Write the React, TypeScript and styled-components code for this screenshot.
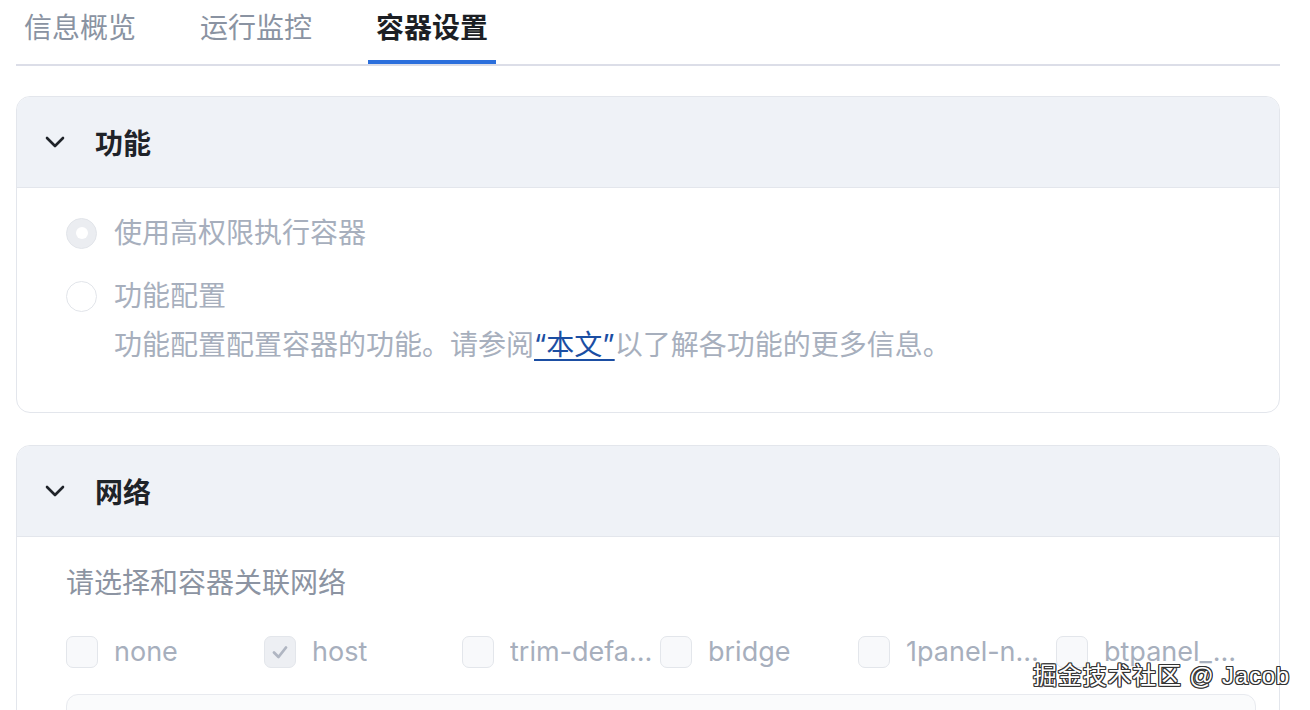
import React from "react";
import styled, { createGlobalStyle } from "styled-components";

const Global = createGlobalStyle`
  html, body { margin: 0; padding: 0; background: #ffffff; }
  body {
    height: 710px;
    overflow: hidden;
    font-family: Inter, "Noto Sans CJK SC", "Noto Sans", sans-serif;
    -webkit-font-smoothing: antialiased;
  }
`;

const Page = styled.div`
  position: relative;
  height: 710px;
  padding: 0 30px 0 16px;
  box-sizing: border-box;
  overflow: hidden;
`;

const Tabs = styled.div`
  display: flex;
  gap: 48px;
  border-bottom: 2px solid #dcdee8;
`;

const Tab = styled.div<{ $active?: boolean }>`
  height: 56px;
  line-height: 56px;
  padding: 0 8px 4px;
  font-size: 28px;
  font-weight: ${(p) => (p.$active ? 600 : 400)};
  color: ${(p) => (p.$active ? "#1c1f24" : "#8a93a2")};
  border-bottom: 4px solid ${(p) => (p.$active ? "#2b6fdc" : "transparent")};
`;

const Cards = styled.div`
  display: flex;
  flex-direction: column;
  gap: 32px;
  margin-top: 30px;
`;

const Card = styled.section`
  border: 1.5px solid #e3e6ec;
  border-radius: 14px;
  overflow: hidden;
  background: #fff;
`;

const CardHeader = styled.div`
  height: 90px;
  display: flex;
  align-items: center;
  gap: 30px;
  padding-left: 28px;
  background: #eff2f7;
  border-bottom: 1.5px solid #e3e6ec;
`;

const Title = styled.div`
  font-size: 28px;
  font-weight: 600;
  color: #1f2329;
`;

const CardBody = styled.div<{ $pt: number; $pb: number }>`
  padding: ${(p) => p.$pt}px 26px ${(p) => p.$pb}px 49px;
  display: flex;
  flex-direction: column;
`;

const RadioRow = styled.div<{ $mt?: number }>`
  display: flex;
  align-items: center;
  gap: 17px;
  height: 40px;
  margin-top: ${(p) => p.$mt ?? 0}px;
`;

const RadioDot = styled.span<{ $checked?: boolean }>`
  width: 31px;
  height: 31px;
  border-radius: 50%;
  box-sizing: border-box;
  border: 1.5px solid #e2e5ea;
  background: ${(p) => (p.$checked ? "#ebedf1" : "#ffffff")};
  display: flex;
  align-items: center;
  justify-content: center;
  &::after {
    content: "";
    width: 12px;
    height: 12px;
    border-radius: 50%;
    background: ${(p) => (p.$checked ? "#ffffff" : "transparent")};
  }
`;

const MutedText = styled.span`
  font-size: 28px;
  color: #a7afbd;
  line-height: 40px;
  white-space: nowrap;
`;

const Desc = styled.div`
  margin-top: 9px;
  margin-left: 48px;
  font-size: 28px;
  line-height: 40px;
  color: #a7afbd;
  white-space: nowrap;
`;

const Link = styled.a`
  color: #1b4ea3;
  text-decoration: underline;
  text-underline-offset: 4px;
  text-decoration-thickness: 2px;
`;

const Prompt = styled.div`
  font-size: 28px;
  line-height: 40px;
  color: #8c94a2;
`;

const CheckRow = styled.div`
  display: flex;
  margin-top: 29px;
  height: 40px;
`;

const CheckItem = styled.label`
  width: 198px;
  flex: none;
  display: flex;
  align-items: center;
  gap: 16px;
`;

const Box = styled.span<{ $checked?: boolean }>`
  width: 32px;
  height: 32px;
  flex: none;
  box-sizing: border-box;
  border: 1.5px solid #e3e6eb;
  border-radius: 7px;
  background: ${(p) => (p.$checked ? "#edeff3" : "#f8f9fb")};
  display: flex;
  align-items: center;
  justify-content: center;
`;

const CheckLabel = styled.span`
  font-size: 27px;
  color: #a7afbd;
  max-width: 146px;
  overflow: hidden;
  text-overflow: ellipsis;
  white-space: nowrap;
  line-height: 40px;
`;

const InputBox = styled.div`
  margin-top: 22px;
  height: 70px;
  border: 1.5px solid #e8eaef;
  border-radius: 12px;
  background: #fafbfc;
  width: 1188px;
`;

const Watermark = styled.div`
  position: absolute;
  right: 20px;
  bottom: 19px;
  font-size: 24px;
  font-family: "Liberation Sans", "Noto Sans CJK SC", sans-serif;
  color: #ffffff;
  letter-spacing: 0.8px;
  text-shadow: 1px 1px 0 #333, -1px -1px 0 #333, 1px -1px 0 #333, -1px 1px 0 #333,
    0 1px 0 #333, 1px 0 0 #333, 0 -1px 0 #333, -1px 0 0 #333;
`;

const Chevron = () => (
  <svg width="20" height="12" viewBox="0 0 20 12" fill="none">
    <polyline
      points="2,2 10,10 18,2"
      stroke="#1f2329"
      strokeWidth="2.6"
      strokeLinecap="round"
      strokeLinejoin="round"
    />
  </svg>
);

const Check = () => (
  <svg width="22" height="22" viewBox="0 0 22 22" fill="none">
    <polyline
      points="5,11.5 9.5,16 17,6.5"
      stroke="#b0b6c2"
      strokeWidth="2.8"
      strokeLinecap="round"
      strokeLinejoin="round"
    />
  </svg>
);

const networks = [
  { name: "none", checked: false },
  { name: "host", checked: true },
  { name: "trim-default", checked: false },
  { name: "bridge", checked: false },
  { name: "1panel-network", checked: false },
  { name: "btpanel_network", checked: false },
];

export default function App() {
  return (
    <>
      <Global />
      <Page>
        <Tabs>
          <Tab>信息概览</Tab>
          <Tab>运行监控</Tab>
          <Tab $active>容器设置</Tab>
        </Tabs>
        <Cards>
          <Card>
            <CardHeader>
              <Chevron />
              <Title>功能</Title>
            </CardHeader>
            <CardBody $pt={25} $pb={47}>
              <RadioRow>
                <RadioDot $checked />
                <MutedText>使用高权限执行容器</MutedText>
              </RadioRow>
              <RadioRow $mt={23}>
                <RadioDot />
                <MutedText>功能配置</MutedText>
              </RadioRow>
              <Desc>
                功能配置配置容器的功能。请参阅<Link>“本文”</Link>以了解各功能的更多信息。
              </Desc>
            </CardBody>
          </Card>
          <Card>
            <CardHeader>
              <Chevron />
              <Title>网络</Title>
            </CardHeader>
            <CardBody $pt={26} $pb={0}>
              <Prompt>请选择和容器关联网络</Prompt>
              <CheckRow>
                {networks.map((n) => (
                  <CheckItem key={n.name}>
                    <Box $checked={n.checked}>{n.checked && <Check />}</Box>
                    <CheckLabel>{n.name}</CheckLabel>
                  </CheckItem>
                ))}
              </CheckRow>
              <InputBox />
            </CardBody>
          </Card>
        </Cards>
        <Watermark>掘金技术社区 @ Jacob</Watermark>
      </Page>
    </>
  );
}
